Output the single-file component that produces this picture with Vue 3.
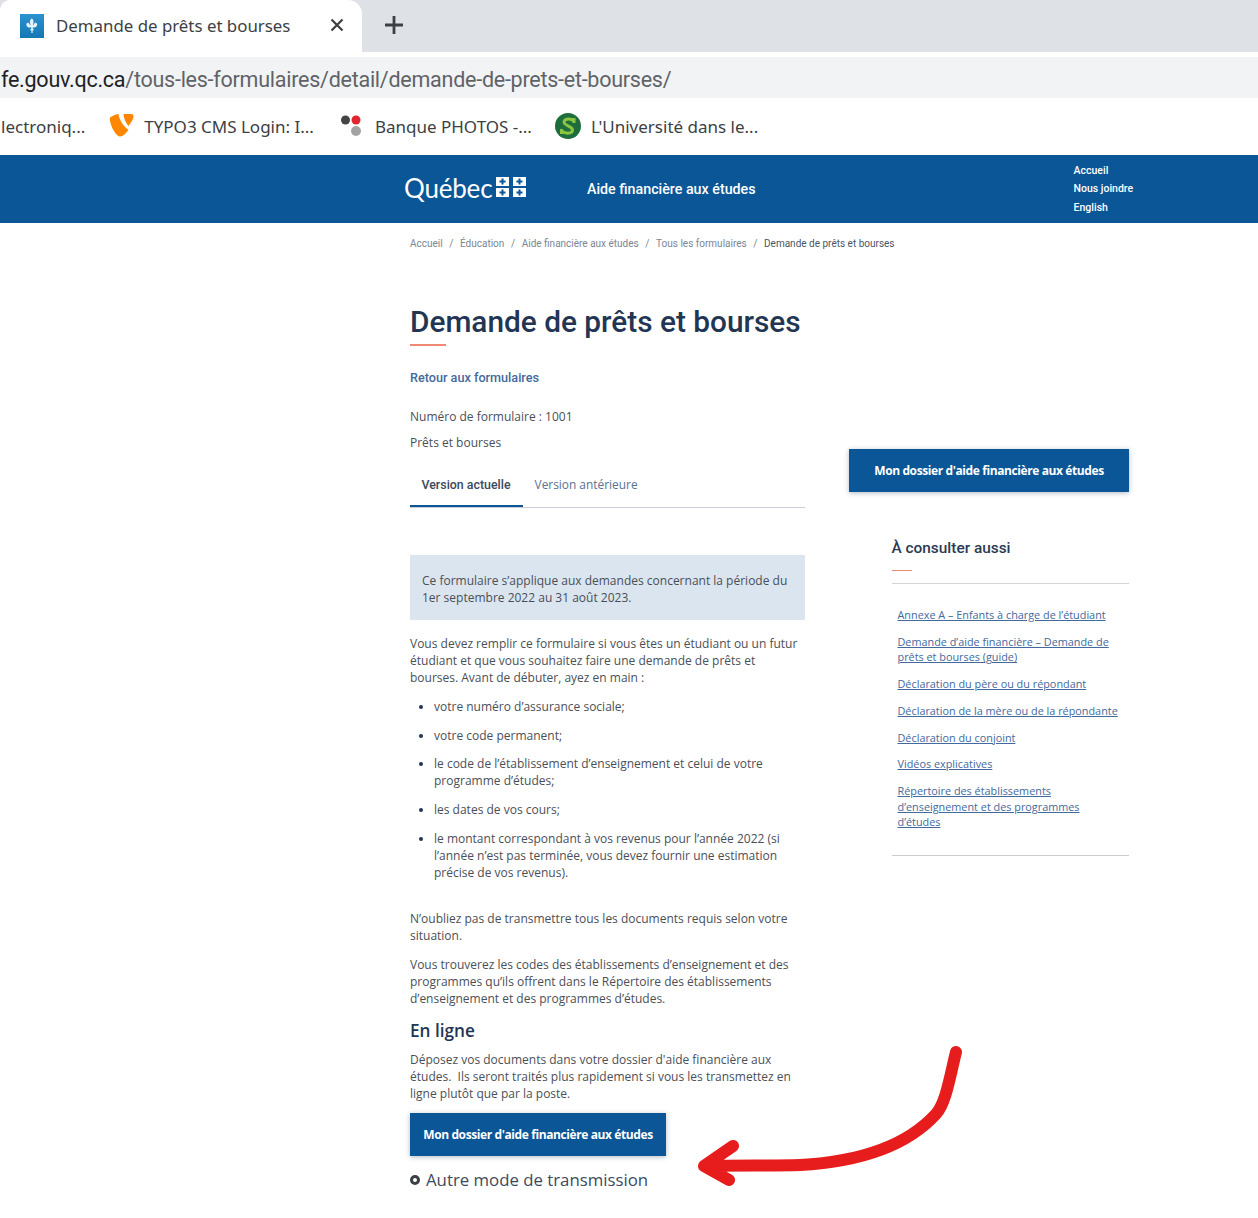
<script setup>
const crumbs = ['Accueil', 'Éducation', 'Aide financière aux études', 'Tous les formulaires']

const items = [
  'votre numéro d’assurance sociale;',
  'votre code permanent;',
  'le code de l’établissement d’enseignement et celui de votre programme d’études;',
  'les dates de vos cours;',
  'le montant correspondant à vos revenus pour l’année 2022 (si l’année n’est pas terminée, vous devez fournir une estimation précise de vos revenus).'
]

const links = [
  'Annexe A – Enfants à charge de l’étudiant',
  'Demande d’aide financière – Demande de prêts et bourses (guide)',
  'Déclaration du père ou du répondant',
  'Déclaration de la mère ou de la répondante',
  'Déclaration du conjoint',
  'Vidéos explicatives',
  'Répertoire des établissements d’enseignement et des programmes d’études'
]

const flagCells = [[0, 0], [17, 0], [0, 11], [17, 11]]
</script>

<template>
  <div class="screen">
    <div class="tabstrip">
      <div class="tab">
        <svg class="favicon" width="24" height="24" viewBox="0 0 24 24">
          <defs>
            <linearGradient id="fav" x1="0" y1="0" x2="0" y2="1">
              <stop offset="0" stop-color="#2a93d0" />
              <stop offset="1" stop-color="#1477b4" />
            </linearGradient>
          </defs>
          <rect width="24" height="24" fill="url(#fav)" />
          <path d="M12 4.500c1.800 1.800 2 3.500.9 6.500h.6c.3-1.800 1.700-3 3-2 1.300 1 .8 3.300-1.500 4.500h-2.200v1.500l1 .6c0 1-1 1.200-1.300 1l.2 2.400h-1.400l.2-2.400c-.3.2-1.300 0-1.300-1l1-.6v-1.500H8.500c-2.300-1.200-2.800-3.500-1.500-4.500 1.300-1 2.700.2 3 2h.6c-1.100-3-.9-4.700.9-6.500z" fill="#e4f2fb" />
        </svg>
        <span class="tab-title">Demande de prêts et bourses</span>
        <svg class="tab-close" width="14" height="14" viewBox="0 0 14 14">
          <path d="M1.500 1.500l11 11M12.500 1.500l-11 11" stroke="#3c4043" stroke-width="2.200" fill="none" />
        </svg>
      </div>
      <svg class="tab-new" width="20" height="20" viewBox="0 0 20 20">
        <path d="M10 1v18M1 10h18" stroke="#3c4043" stroke-width="2.800" fill="none" />
      </svg>
    </div>

    <div class="urlbar">
      <span class="url-host">fe.gouv.qc.ca</span><span class="url-path">/tous-les-formulaires/detail/demande-de-prets-et-bourses/</span>
    </div>

    <div class="bookmarks">
      <span class="bm bm-first">lectroniq...</span>
      <span class="bm bm-typo">
        <svg width="26" height="26" viewBox="0 0 26 26">
          <path d="M2 4.500C4 3 7 1.500 10.500 1C11 6 15 13 20.500 17C18 20 15 23.500 12 23.500C8 23.500 1 11 2 4.500zM15.500 1H23C25 1 25.500 2 25.500 3.500C25.500 6 23 10 20.500 13C18 10 15.500 5 15.500 1z" fill="#ff8700" />
        </svg>
        TYPO3 CMS Login: I...
      </span>
      <span class="bm bm-photos">
        <svg width="26" height="26" viewBox="0 0 26 26">
          <circle cx="6.500" cy="7" r="4.500" fill="#444" />
          <circle cx="17" cy="7" r="4.500" fill="#e3262e" />
          <circle cx="17" cy="18" r="5" fill="#a3a3a3" />
        </svg>
        Banque PHOTOS -...
      </span>
      <span class="bm bm-univ">
        <svg width="26" height="26" viewBox="0 0 26 26">
          <circle cx="13" cy="13" r="13" fill="#1d6e3c" />
          <path d="M19 8.500C17 5 9.500 5 9 9c-.4 4 8.500 3.500 8.500 8 0 4-7.500 4-10.500 1M19 5v5M6.500 16v5" stroke="#8cc63f" stroke-width="3" fill="none" />
        </svg>
        L'Université dans le...
      </span>
    </div>

    <header class="site-header">
      <div class="brand">
        <span class="brand-name">Québec</span>
        <svg class="brand-flag" width="30" height="20" viewBox="0 0 30 20">
          <g v-for="cell in flagCells" :key="cell.join('-')" :transform="`translate(${cell[0]} ${cell[1]})`">
            <rect width="13" height="9" fill="#fff" />
            <path d="M6.500 1.500v6M3.500 4.500h6" stroke="#0a5697" stroke-width="2" />
          </g>
        </svg>
      </div>
      <div class="site-title">Aide financière aux études</div>
      <nav class="top-nav">
        <span>Accueil</span>
        <span>Nous joindre</span>
        <span>English</span>
      </nav>
    </header>

    <div class="breadcrumb">
      <template v-for="crumb in crumbs" :key="crumb">
        <span>{{ crumb }}</span>
        <span class="sep">/</span>
      </template>
      <span class="crumb-current">Demande de prêts et bourses</span>
    </div>

    <div class="page">
      <main class="content">
        <h1>Demande de prêts et bourses</h1>
        <div class="accent"></div>
        <a class="back">Retour aux formulaires</a>
        <p class="meta">Numéro de formulaire : 1001</p>
        <p class="meta meta-second">Prêts et bourses</p>

        <div class="tabs">
          <span class="tab-item active">Version actuelle</span>
          <span class="tab-item">Version antérieure</span>
        </div>

        <div class="notice">
          Ce formulaire s’applique aux demandes concernant la période du
          1er septembre 2022 au 31 août 2023.
        </div>

        <p class="para para-first">
          Vous devez remplir ce formulaire si vous êtes un étudiant ou un futur étudiant et que
          vous souhaitez faire une demande de prêts et bourses. Avant de débuter, ayez en main :
        </p>
        <ul class="needs">
          <li v-for="item in items" :key="item">{{ item }}</li>
        </ul>
        <p class="para para-gap">
          N’oubliez pas de transmettre tous les documents requis selon votre situation.
        </p>
        <p class="para">
          Vous trouverez les codes des établissements d’enseignement et des programmes qu’ils
          offrent dans le Répertoire des établissements d’enseignement et des programmes d’études.
        </p>

        <h2>En ligne</h2>
        <p class="para">
          Déposez vos documents dans votre dossier d'aide financière aux études.&nbsp; Ils seront
          traités plus rapidement si vous les transmettez en ligne plutôt que par la poste.
        </p>
        <a class="btn btn-inline">Mon dossier d'aide financière aux études</a>
        <div class="other-mode">
          <span class="ring"></span>
          Autre mode de transmission
        </div>
      </main>

      <aside class="side">
        <a class="btn btn-side">Mon dossier d'aide financière aux études</a>
        <div class="related">
          <h3>À consulter aussi</h3>
          <div class="accent accent-small"></div>
          <ul class="links">
            <li v-for="link in links" :key="link"><a>{{ link }}</a></li>
          </ul>
        </div>
      </aside>
    </div>

    <svg class="arrow" width="280" height="150" viewBox="690 1040 280 150">
      <path d="M956 1052C950 1076 946 1103 936 1114C905 1148 855 1162 800 1165C770 1166 740 1165 704 1166M733 1146L704 1166L729 1180" fill="none" stroke="#e71c1c" stroke-width="12" stroke-linecap="round" stroke-linejoin="round" />
    </svg>
  </div>
</template>

<style scoped>
.screen {
  position: relative;
  width: 1258px;
  height: 1218px;
  overflow: hidden;
  background: #fff;
  font-family: 'Open Sans', sans-serif;
  color: #4a4f57;
}

.tabstrip {
  height: 52px;
  display: flex;
  align-items: center;
  background: #dee1e6;
}

.tab {
  width: 362px;
  height: 52px;
  box-sizing: border-box;
  padding: 0 18px 0 20px;
  display: flex;
  align-items: center;
  background: #fff;
  border-radius: 10px 14px 0 0;
}

.favicon {
  flex: none;
}

.tab-title {
  margin-left: 12px;
  margin-top: -2px;
  flex: 1;
  font-family: 'Noto Sans', sans-serif;
  font-size: 16.850px;
  color: #3c4043;
  white-space: nowrap;
}

.tab-close {
  margin-top: -2px;
}

.tab-new {
  margin-left: 22px;
  margin-top: -2px;
}

.urlbar {
  margin-top: 5px;
  height: 41px;
  line-height: 45px;
  background: #f1f3f4;
  font-family: Roboto, sans-serif;
  font-size: 21.500px;
  letter-spacing: -0.250px;
  padding-left: 1px;
  white-space: nowrap;
  color: #5f6368;
}

.url-host {
  color: #202124;
}

.bookmarks {
  height: 56px;
  display: flex;
  align-items: center;
  font-family: 'Noto Sans', sans-serif;
  font-size: 17px;
  color: #3c4043;
  white-space: nowrap;
}

.bm {
  display: flex;
  align-items: center;
  gap: 10px;
}

.bm-first { margin-left: 1px; }
.bm-typo { margin-left: 23px; }
.bm-photos { margin-left: 25px; }
.bm-univ { margin-left: 23px; }

.site-header {
  margin-top: 1px;
  height: 68px;
  display: flex;
  align-items: center;
  padding-left: 404px;
  background: #0a5697;
  color: #fff;
}

.brand {
  width: 123px;
  display: flex;
  align-items: center;
  gap: 4px;
}

.brand-name {
  margin-bottom: 3px;
  font-family: Lato, sans-serif;
  font-size: 26px;
  letter-spacing: -0.200px;
}

.brand-flag {
  margin-bottom: 4px;
}

.site-title {
  margin-left: 60px;
  font-family: Roboto, sans-serif;
  font-weight: 500;
  font-size: 14.250px;
}

.top-nav {
  margin-left: 318px;
  display: flex;
  flex-direction: column;
  gap: 4.500px;
  font-family: Roboto, sans-serif;
  font-weight: 500;
  font-size: 10.500px;
  line-height: 14px;
}

.breadcrumb {
  height: 40px;
  padding-left: 410px;
  display: flex;
  align-items: center;
  gap: 6.600px;
  font-family: Roboto, sans-serif;
  font-size: 10px;
  color: #7a8694;
}

.crumb-current {
  color: #4a5564;
}

.page {
  display: grid;
  grid-template-columns: 395px 280px;
  column-gap: 44px;
  padding-left: 410px;
  padding-top: 40px;
}

h1 {
  margin: 0;
  font-family: Roboto, sans-serif;
  font-weight: 500;
  font-size: 29.800px;
  line-height: 38px;
  color: #223654;
  white-space: nowrap;
}

.accent {
  margin-top: 3px;
  width: 36px;
  height: 2px;
  background: #f08a75;
}

.back {
  display: block;
  margin-top: 23px;
  font-family: Roboto, sans-serif;
  font-weight: 500;
  font-size: 12.650px;
  line-height: 18px;
  color: #44699c;
}

.meta {
  margin: 21px 0 0;
  font-size: 12px;
  line-height: 17px;
}

.meta-second {
  margin-top: 9px;
}

.tabs {
  margin-top: 8px;
  display: flex;
  border-bottom: 1px solid #c9cfd8;
  box-sizing: border-box;
  height: 49px;
}

.tab-item {
  padding: 0 12px;
  line-height: 50px;
  font-size: 11.900px;
  color: #5a7193;
}

.tab-item.active {
  padding-left: 11.500px;
  line-height: 52px;
  font-family: Roboto, sans-serif;
  font-weight: 500;
  font-size: 12.400px;
  color: #3c4a5c;
  height: 48px;
  box-sizing: border-box;
  border-bottom: 2px solid #0a5697;
}

.notice {
  margin-top: 47px;
  padding: 17px 12px 0;
  height: 65px;
  box-sizing: border-box;
  background: #dae5ef;
  font-size: 12px;
  line-height: 17px;
}

.para {
  margin: 12px 0 0;
  font-size: 12px;
  line-height: 17px;
}

.para-first {
  margin-top: 15px;
}

.needs {
  margin: 12px 0 0;
  padding: 0 0 0 24px;
  font-size: 12px;
  line-height: 17px;
}

.needs li {
  margin-bottom: 11.700px;
}

.needs li::marker {
  color: #223654;
}

.para-gap {
  margin-top: 29px;
}

h2 {
  margin: 10px 0 0;
  font-family: 'Open Sans', sans-serif;
  font-weight: 600;
  font-size: 17.200px;
  line-height: 28px;
  color: #223654;
}

h2 + .para {
  margin-top: 6px;
}

.btn {
  display: block;
  box-sizing: border-box;
  background: #0a5697;
  color: #fff;
  text-align: center;
  font-weight: 700;
  font-size: 12px;
  box-shadow: 0 1px 5px rgba(34, 54, 84, 0.35);
  white-space: nowrap;
}

.btn-inline {
  margin-top: 11px;
  width: 256px;
  height: 43px;
  line-height: 43px;
  letter-spacing: -0.400px;
}

.btn-side {
  height: 43px;
  line-height: 44px;
  letter-spacing: -0.400px;
}

.other-mode {
  margin-top: 11px;
  display: flex;
  align-items: center;
  gap: 6px;
  font-size: 16.800px;
  line-height: 26px;
  color: #3c4a5c;
}

.ring {
  width: 10px;
  height: 10px;
  box-sizing: border-box;
  border: 3px solid #3c4043;
  border-radius: 50%;
}

.side {
  padding-top: 146px;
}

.related {
  margin-top: 44px;
  margin-left: 42.500px;
}

h3 {
  margin: 0;
  font-family: Roboto, sans-serif;
  font-weight: 500;
  font-size: 15.400px;
  line-height: 24px;
  color: #2b3a50;
}

.accent-small {
  margin-top: 10px;
  width: 20px;
  height: 1px;
}

.links {
  list-style: none;
  margin: 12px 0 0;
  padding: 23px 6px 25px;
  border-top: 1px solid #d2d4d8;
  border-bottom: 1px solid #c9cbd0;
  font-size: 10.850px;
  line-height: 15.500px;
}

.links li + li {
  margin-top: 11.300px;
}

.links a {
  color: #44699c;
  text-decoration: underline;
}

.arrow {
  position: absolute;
  left: 690px;
  top: 1040px;
}
</style>
